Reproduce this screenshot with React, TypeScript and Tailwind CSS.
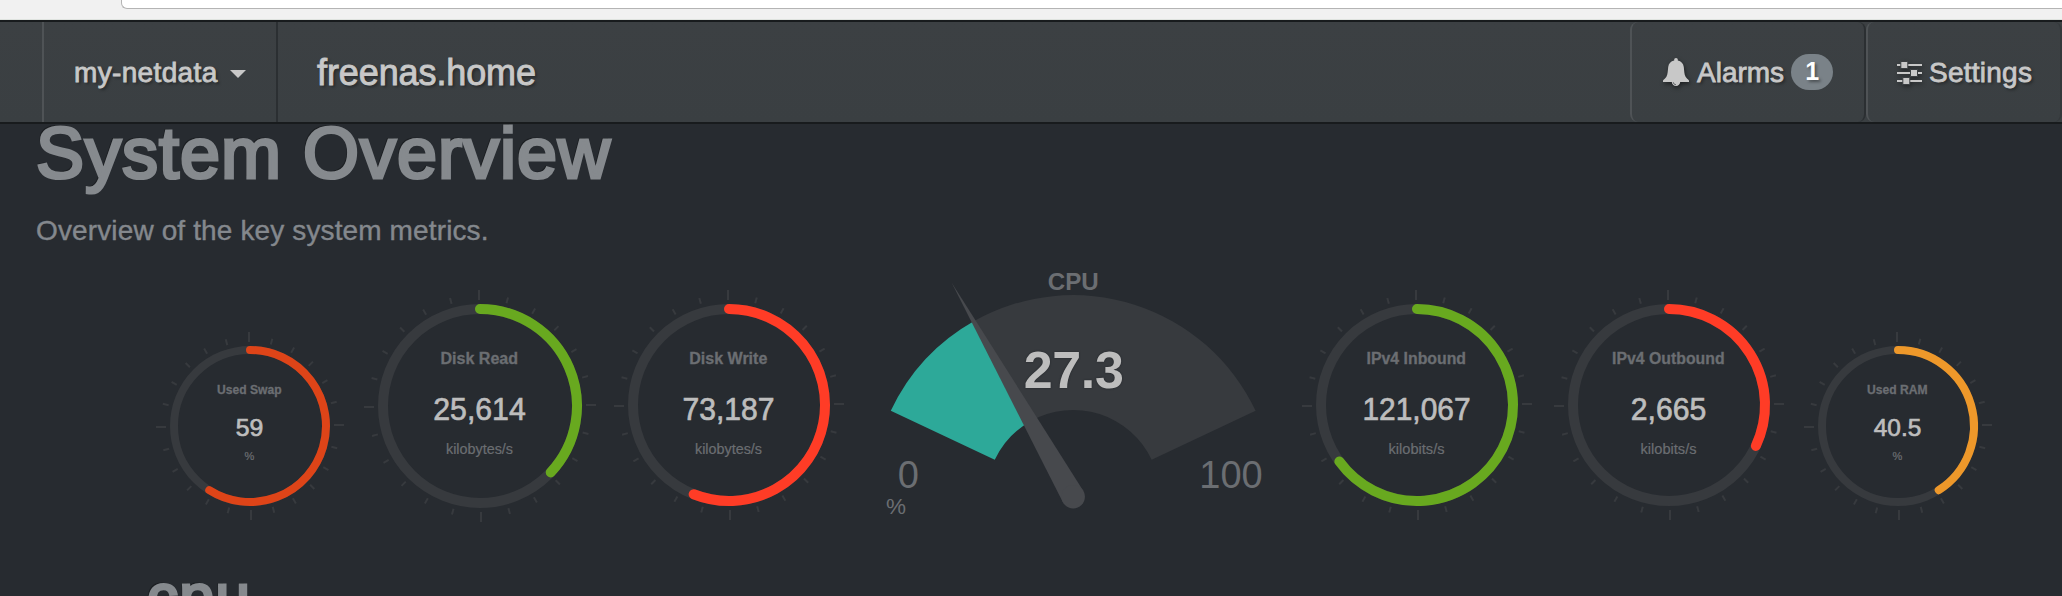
type Label = { text: string; y: number; size: number; width: number };

type PieProps = {
  size: number;
  line: number;
  percent: number;
  color: string;
  title: Label;
  value: Label;
  unit: Label;
  className: string;
};

const TICKS = Array.from({ length: 24 }, (_, i) => i);

function PieText({ label, cx, fill, bold, weight = 0 }: { label: Label; cx: number; fill: string; bold?: boolean; weight?: number }) {
  return (
    <text
      x={cx}
      y={label.y}
      textAnchor="middle"
      fontSize={label.size}
      fontWeight={bold ? 700 : 400}
      fill={fill}
      stroke={fill}
      strokeWidth={weight}
      textLength={label.width}
      lengthAdjust="spacingAndGlyphs"
    >
      {label.text}
    </text>
  );
}

function PieChart({ size, line, percent, color, title, value, unit, className }: PieProps) {
  const c = size / 2;
  const r = c - 14 - line / 2;
  const a = (percent / 100) * 2 * Math.PI;
  const ex = c + r * Math.sin(a);
  const ey = c - r * Math.cos(a);
  return (
    <svg width={size} height={size} viewBox={`0 0 ${size} ${size}`} className={className}>
      {TICKS.map((i) => {
        const major = i % 6 === 0;
        return (
          <rect
            key={i}
            x={major ? 0 : 4}
            y={c}
            width={major ? 10 : 6}
            height={2}
            fill="#373a3e"
            transform={`rotate(${i * 15} ${c} ${c})`}
          />
        );
      })}
      <circle cx={c} cy={c} r={r} fill="none" stroke="#373a3e" strokeWidth={line} />
      <path
        d={`M${c} ${c - r}A${r} ${r} 0 ${percent > 50 ? 1 : 0} 1 ${ex} ${ey}`}
        fill="none"
        stroke={color}
        strokeWidth={line}
        strokeLinecap="round"
      />
      <PieText label={title} cx={c - 0.7} fill="#6b6e72" bold weight={0.3} />
      <PieText label={value} cx={c - 0.5} fill="#bdbdbd" weight={0.7} />
      <PieText label={unit} cx={c - 0.5} fill="#6b6e72" weight={0.2} />
    </svg>
  );
}

const CX = 209.2;
const CY = 226.7;

function polar(r: number, deg: number) {
  const t = (deg * Math.PI) / 180;
  return `${CX - r * Math.cos(t)} ${CY - r * Math.sin(t)}`;
}

function sector(from: number, to: number) {
  return `M${polar(201.6, from)}A201.6 201.6 0 0 1 ${polar(201.6, to)}L${polar(86.7, to)}A86.7 86.7 0 0 0 ${polar(86.7, from)}Z`;
}

function CpuGauge() {
  const value = 25.2 + 0.273 * 129.6;
  return (
    <svg width={418} height={252} viewBox="0 0 418 252" className="mx-5 overflow-visible">
      <path d={sector(value, 154.8)} fill="#373a3e" />
      <path d={sector(25.2, value)} fill="#2da999" />
      <g fill="#47494d">
        <path d={`M${polar(246, 60.4)}L${polar(11.7, 150.4)}L${polar(11.7, -29.6)}Z`} />
        <circle cx={CX} cy={CY} r={11.7} />
      </g>
      <g fill="#6b6e72">
        <text x={209.3} y={20} fontSize={24} fontWeight={700} textAnchor="middle" textLength={51} lengthAdjust="spacingAndGlyphs">CPU</text>
        <text x={44.4} y={218} fontSize={38} textAnchor="middle">0</text>
        <text x={367} y={218} fontSize={38} textAnchor="middle">100</text>
        <text x={32} y={244} fontSize={22.5} textAnchor="middle">%</text>
      </g>
      <text
        x={209.8}
        y={118.3}
        fontSize={52}
        fontWeight={700}
        textAnchor="middle"
        fill="#bdbdbd"
        textLength={100}
        className="[text-shadow:0_0_2px_#1f2226]"
      >
        27.3
      </text>
    </svg>
  );
}

function BellIcon() {
  return (
    <svg width={26} height={28} viewBox="0 0 26 28" fill="#c8c8c8" className="shrink-0 [filter:drop-shadow(1px_2px_2px_rgba(0,0,0,0.5))]">
      <path d="M13 0c1.1 0 1.8.8 1.8 1.8v.7c3.400.8 5.500 3 6 6.500.5 4 .4 7.500 1.800 9.800.9 1.500 2.300 2.400 3.400 3.700v1.500H0v-1.500c1.100-1.300 2.500-2.200 3.400-3.700 1.400-2.300 1.300-5.800 1.800-9.800.5-3.500 2.600-5.700 6-6.500v-.7C11.200.8 11.900 0 13 0z" />
      <path d="M8.800 24h8.400c0 2.300-1.900 4-4.200 4s-4.200-1.700-4.200-4z" />
      <path d="M10.300 24.300c.2 1.500 1.200 2.300 2.600 2.400" fill="none" stroke="#3a3e42" strokeWidth={0.8} />
    </svg>
  );
}

function SlidersIcon() {
  return (
    <svg width={25} height={24} viewBox="0 0 25 24" fill="#c8c8c8" className="shrink-0 overflow-visible [filter:drop-shadow(1px_2px_2px_rgba(0,0,0,0.4))]">
      <path d="M0 4h25v2H0zM0 12h25v2H0zM0 20h25v2H0z" />
      <path d="M3.800 1.500h7v7h-7zM13.500 9.500h7v7h-7zM5.800 17.500h7v7h-7z" stroke="#3b3f42" strokeWidth={1} />
    </svg>
  );
}

export default function App() {
  return (
    <div className="flex h-[596px] w-[2062px] flex-col overflow-hidden bg-[#272b30] font-['Liberation_Sans',Arial,sans-serif]">
      <div className="h-5 shrink-0 border-b border-[#dfe3df] bg-[#f1f1f1] pl-[121px]">
        <div className="h-[9px] rounded-bl-md border-b border-l border-[#b4b4b4] bg-white" />
      </div>
      <nav className="flex h-[104px] shrink-0 border-y-2 border-[#181b1d] bg-linear-to-b from-[#3c4043] to-[#3a3f42] text-[28px] text-[#c8c8c8] [text-shadow:2px_2px_3px_rgba(0,0,0,0.4)]">
        <div className="ml-[42px] flex w-[236px] items-center border-l-2 border-r-2 border-l-[#4f5356] border-r-[#2b2f32] pl-[30px]">
          <span className="pt-0.5 tracking-[0.35px] [-webkit-text-stroke:0.8px_#c8c8c8]">my-netdata</span>
          <svg width={16} height={8} viewBox="0 0 16 8" className="ml-3 mt-1" fill="#c8c8c8">
            <path d="M0 0h16L8 8z" />
          </svg>
        </div>
        <div className="flex items-center pl-[39px] text-[36px]">
          <span className="pt-px tracking-[-0.1px] [-webkit-text-stroke:0.9px_#c8c8c8]">freenas.home</span>
        </div>
        <div className="ml-auto flex w-[236px] items-center rounded-lg border-l-2 border-r-2 border-l-[#4f5356] border-r-[#2b2f32] pl-[31px]">
          <BellIcon />
          <span className="ml-2 pt-0.5 [-webkit-text-stroke:0.8px_#c8c8c8]">Alarms</span>
          <span className="ml-[7px] flex h-9 w-[42px] items-center justify-center rounded-[18px] bg-[#7a8288] text-[25px] font-bold text-white">1</span>
        </div>
        <div className="flex w-[196px] items-center rounded-lg border-l-2 border-r-2 border-l-[#4f5356] border-r-[#34383b] pl-[29px]">
          <SlidersIcon />
          <span className="ml-[7px] pt-0.5 tracking-[0.25px] [-webkit-text-stroke:0.8px_#c8c8c8]">Settings</span>
        </div>
      </nav>
      <main className="flex flex-col">
        <h1 className="h-[80px] pl-[36px] text-[72px] leading-[58px] tracking-[1px] text-[#868a8e] [-webkit-text-stroke:3.200px_#868a8e] [text-shadow:-2px_-2px_0_rgba(0,0,0,0.3)]">
          System Overview
        </h1>
        <p className="h-[66px] pl-[36px] text-[28px] leading-[53px] tracking-[0.13px] text-[#84888d] [-webkit-text-stroke:0.4px_#84888d]">
          Overview of the key system metrics.
        </p>
        <section className="flex h-[252px] items-start pl-[156px]">
          <PieChart
            size={188} line={8} percent={59} color="#de4418" className="mt-[62px]"
            title={{ text: "Used Swap", y: 62.3, size: 12, width: 64.5 }}
            value={{ text: "59", y: 104.3, size: 24, width: 27.5 }}
            unit={{ text: "%", y: 128, size: 10.5, width: 9.8 }}
          />
          <PieChart
            size={232} line={10} percent={37} color="#68a91f" className="ml-5 mt-5"
            title={{ text: "Disk Read", y: 74, size: 16, width: 77.5 }}
            value={{ text: "25,614", y: 129.6, size: 31, width: 92.5 }}
            unit={{ text: "kilobytes/s", y: 164, size: 14, width: 67 }}
          />
          <PieChart
            size={230} line={10} percent={56} color="#ff3c26" className="ml-[18px] mt-5"
            title={{ text: "Disk Write", y: 74, size: 16, width: 78 }}
            value={{ text: "73,187", y: 129.6, size: 31, width: 92 }}
            unit={{ text: "kilobytes/s", y: 164, size: 14, width: 67 }}
          />
          <CpuGauge />
          <PieChart
            size={230} line={10} percent={65} color="#68a91f" className="mt-5"
            title={{ text: "IPv4 Inbound", y: 74, size: 16, width: 99.5 }}
            value={{ text: "121,067", y: 129.6, size: 31, width: 108 }}
            unit={{ text: "kilobits/s", y: 164, size: 14, width: 56 }}
          />
          <PieChart
            size={230} line={10} percent={32} color="#ff3c26" className="ml-[22px] mt-5"
            title={{ text: "IPv4 Outbound", y: 74, size: 16, width: 112.5 }}
            value={{ text: "2,665", y: 129.6, size: 31, width: 75.5 }}
            unit={{ text: "kilobits/s", y: 164, size: 14, width: 56 }}
          />
          <PieChart
            size={188} line={8} percent={41} color="#ee982a" className="ml-5 mt-[62px]"
            title={{ text: "Used RAM", y: 62.3, size: 12, width: 60.5 }}
            value={{ text: "40.5", y: 104.3, size: 24, width: 47.5 }}
            unit={{ text: "%", y: 128, size: 10.5, width: 9.8 }}
          />
        </section>
        <h2 className="mt-[44px] h-[60px] pl-[147px] text-[62px] leading-[60px] tracking-[1.5px] text-[#868a8e] [-webkit-text-stroke:3px_#868a8e] [text-shadow:-2px_-2px_0_rgba(0,0,0,0.3)]">
          cpu
        </h2>
      </main>
    </div>
  );
}
